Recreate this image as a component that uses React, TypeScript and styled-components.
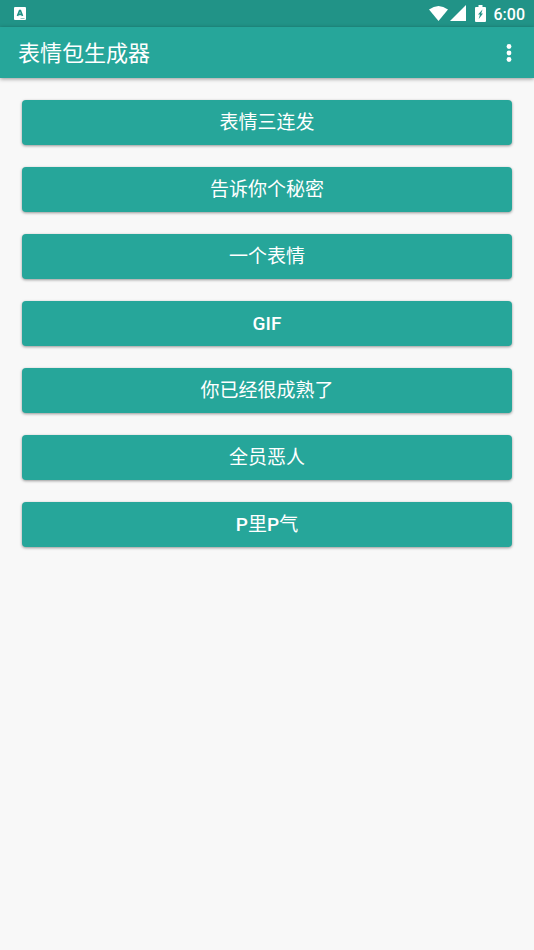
import React from "react";
import styled, { createGlobalStyle } from "styled-components";

const GlobalStyle = createGlobalStyle`
  * { box-sizing: border-box; }
  body { margin: 0; background: #f8f8f8; font-family: Roboto, "Noto Sans CJK SC", sans-serif; color: #fff; }
`;

const StatusBar = styled.div`
  display: flex;
  align-items: center;
  height: 27px;
  padding: 0 9px 0 14px;
  background: #219387;
`;

const StatusIcons = styled.div`
  display: flex;
  align-items: center;
  margin-left: auto;
  svg { display: block; }
`;

const Battery = styled.svg`
  margin: 0 8px 0 9px;
`;

const Clock = styled.time`
  padding-top: 2px;
  font-size: 16px;
  font-weight: 500;
  line-height: 24px;
`;

const Toolbar = styled.header`
  display: flex;
  align-items: center;
  justify-content: space-between;
  height: 51px;
  padding: 0 12px 0 18px;
  background: #26a69a;
  box-shadow: 0 1px 4px rgba(0, 0, 0, 0.4);
`;

const Title = styled.h1`
  margin: 0;
  padding-top: 2px;
  font-size: 22px;
  font-weight: 400;
  line-height: 32px;
`;

const MenuButton = styled.button`
  display: flex;
  padding: 12px 10px;
  border: 0;
  background: none;
  color: inherit;
  cursor: pointer;
`;

const ButtonList = styled.main`
  display: flex;
  flex-direction: column;
  gap: 22px;
  padding: 22px;
`;

const ActionButton = styled.button`
  height: 45px;
  padding: 1px 0 0;
  border: 0;
  border-radius: 4px;
  background: #26a69a;
  box-shadow: 0 1px 3px rgba(0, 0, 0, 0.4);
  color: inherit;
  font: 400 19px/28px Roboto, "Noto Sans CJK SC", sans-serif;
  cursor: pointer;
`;

const Latin = styled.span`
  font-weight: 500;
`;

const actions = ["表情三连发", "告诉你个秘密", "一个表情", "GIF", "你已经很成熟了", "全员恶人", "P里P气"];

function Label({ text }: { text: string }) {
  return (
    <>
      {text.split(/([A-Za-z]+)/).map((part, i) => (i % 2 ? <Latin key={i}>{part}</Latin> : part))}
    </>
  );
}

export default function App() {
  return (
    <>
      <GlobalStyle />
      <StatusBar>
        <svg width="12" height="13" viewBox="0 0 12 13" aria-hidden="true">
          <rect width="12" height="13" rx="1" fill="#fff" />
          <path d="M3.500 9 5.600 3.500h.8L8.500 9M4.200 7.300h3.600" fill="none" stroke="#219387" strokeWidth="1.700" />
          <path d="M6.500 11.500h4" stroke="#219387" strokeWidth="0.500" />
        </svg>
        <StatusIcons>
          <svg width="37" height="17" viewBox="0 0 37 17" fill="#fff" aria-hidden="true">
            <path d="M0 4.500Q9.500 -2.500 19 4.500L9.500 16Z" />
            <path d="M37 0v16H21Z" />
          </svg>
          <Battery width="11" height="17" viewBox="0 0 11 17" aria-hidden="true">
            <path d="M3.500 0h4v2H10q1 0 1 1v13q0 1-1 1H1q-1 0-1-1V3q0-1 1-1h2.500Z" fill="#fff" />
            <path d="M7.500 4.500 3 9.500h2L3.700 14 8 8.500H6.200Z" fill="#219387" />
          </Battery>
          <Clock>6:00</Clock>
        </StatusIcons>
      </StatusBar>
      <Toolbar>
        <Title>表情包生成器</Title>
        <MenuButton type="button" aria-label="更多选项">
          <svg width="6" height="18" viewBox="0 0 6 18" fill="currentColor" aria-hidden="true">
            <circle cx="3" cy="2.500" r="2.400" />
            <circle cx="3" cy="9" r="2.400" />
            <circle cx="3" cy="15.500" r="2.400" />
          </svg>
        </MenuButton>
      </Toolbar>
      <ButtonList>
        {actions.map((label) => (
          <ActionButton key={label} type="button">
            <Label text={label} />
          </ActionButton>
        ))}
      </ButtonList>
    </>
  );
}
